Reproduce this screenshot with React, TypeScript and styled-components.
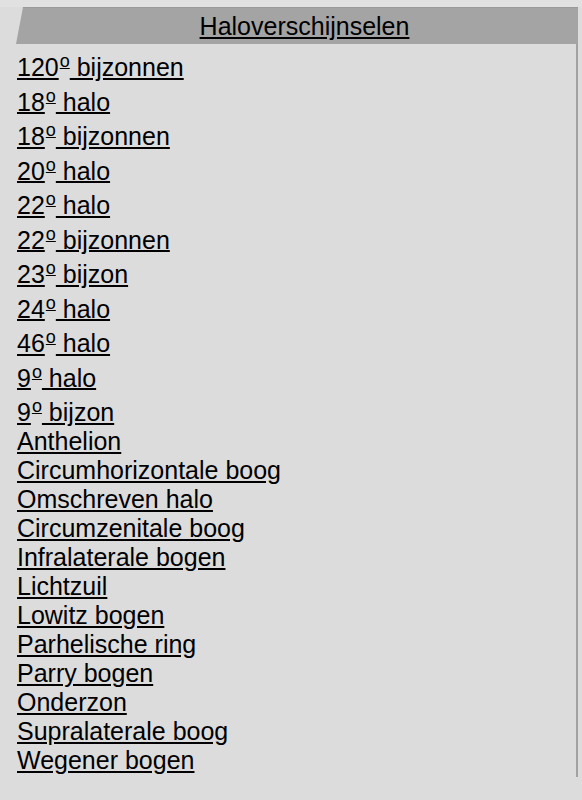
import React from "react";
import styled, { createGlobalStyle } from "styled-components";

const Global = createGlobalStyle`
  html, body { margin: 0; padding: 0; background: #dcdcdc; }
  body { font-family: "Liberation Sans", Arial, Helvetica, sans-serif; }
`;

const Page = styled.div`
  width: 582px;
  height: 800px;
  box-sizing: border-box;
  padding: 0 4px 0 16px;
  background: #dcdcdc;
  border-top: 7px solid #e1e1e1;
`;

const Panel = styled.div`
  display: flex;
  flex-direction: column;
`;

const Header = styled.div`
  height: 37px;
  box-sizing: border-box;
  padding: 4px 0 0 15px;
  background: #a4a4a4;
  border-top: 1px solid #9a9a9a;
  clip-path: polygon(7px 0, 100% 0, 100% 100%, 0 100%);
  text-align: center;
  font-size: 25px;
  line-height: normal;
`;

const HeaderLink = styled.a`
  color: #000;
  text-decoration: underline;
`;

const List = styled.div`
  display: flex;
  flex-direction: column;
  padding: 3px 0 2px 1px;
  border-right: 2px solid #a2a2a2;
`;

const Item = styled.a`
  display: block;
  color: #000;
  text-decoration: none;
  font-size: 25px;
  line-height: normal;
  white-space: nowrap;
`;

const Part = styled.span`
  text-decoration: underline;
`;

const Deg = styled.sup`
  font-size: 18px;
  vertical-align: 8.5px;
  line-height: 28.6px;
  text-decoration: underline;
  margin-left: 1px;
`;

type Entry = { deg?: string; text: string };

const entries: Entry[] = [
  { deg: "120", text: " bijzonnen" },
  { deg: "18", text: " halo" },
  { deg: "18", text: " bijzonnen" },
  { deg: "20", text: " halo" },
  { deg: "22", text: " halo" },
  { deg: "22", text: " bijzonnen" },
  { deg: "23", text: " bijzon" },
  { deg: "24", text: " halo" },
  { deg: "46", text: " halo" },
  { deg: "9", text: " halo" },
  { deg: "9", text: " bijzon" },
  { text: "Anthelion" },
  { text: "Circumhorizontale boog" },
  { text: "Omschreven halo" },
  { text: "Circumzenitale boog" },
  { text: "Infralaterale bogen" },
  { text: "Lichtzuil" },
  { text: "Lowitz bogen" },
  { text: "Parhelische ring" },
  { text: "Parry bogen" },
  { text: "Onderzon" },
  { text: "Supralaterale boog" },
  { text: "Wegener bogen" },
];

export default function App() {
  return (
    <>
      <Global />
      <Page>
        <Panel>
          <Header>
            <HeaderLink href="#">Haloverschijnselen</HeaderLink>
          </Header>
          <List>
            {entries.map((e, i) => (
              <Item key={i} href="#">
                {e.deg ? (
                  <>
                    <Part>{e.deg}</Part>
                    <Deg>o</Deg>
                    <Part>{e.text}</Part>
                  </>
                ) : (
                  <Part>{e.text}</Part>
                )}
              </Item>
            ))}
          </List>
        </Panel>
      </Page>
    </>
  );
}
